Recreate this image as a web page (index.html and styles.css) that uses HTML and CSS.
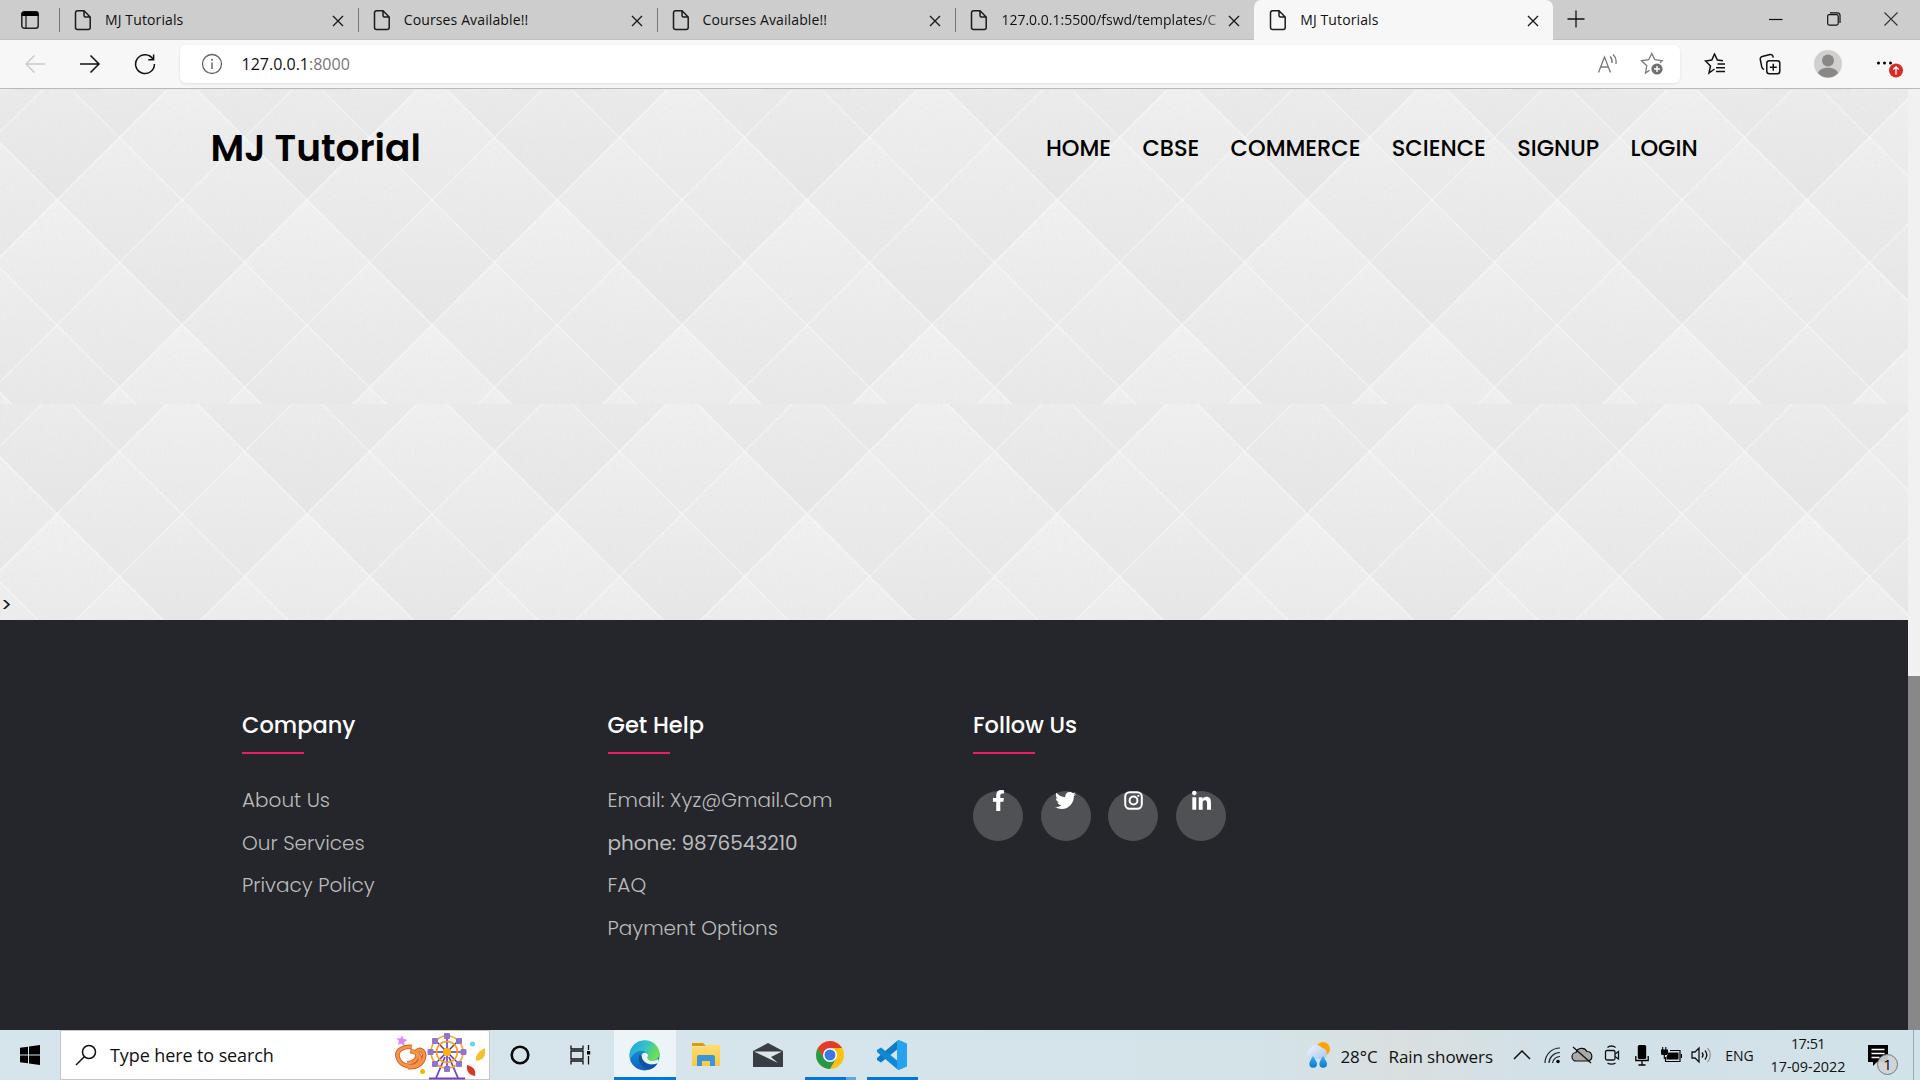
FILE: index.html
```html
<!DOCTYPE html>
<html lang="en">
<head>
<meta charset="utf-8">
<title>MJ Tutorials</title>
<link rel="stylesheet" href="styles.css">
</head>
<body>
<svg class="defs" aria-hidden="true">
  <defs>
    <symbol id="page" viewBox="0 0 18 22"><path d="M3.5 1.8H10L16.2 8v10.4a2 2 0 0 1-2 2H3.5a2 2 0 0 1-2-2V3.8a2 2 0 0 1 2-2zM10 2v4.5A1.5 1.5 0 0 0 11.500 8H16" fill="none" stroke="#1b1b1b" stroke-width="1.5"/></symbol>
    <symbol id="close" viewBox="0 0 12 12"><path d="M1 1l10 10M11 1L1 11" stroke="#1b1b1b" stroke-width="1.4"/></symbol>
    <linearGradient id="edgeA" x1="0" y1="0" x2="1" y2=".4"><stop offset="0" stop-color="#1fa5e0"/><stop offset=".55" stop-color="#35c1c9"/><stop offset="1" stop-color="#6be04c"/></linearGradient>
    <linearGradient id="edgeB" x1="0" y1="0" x2="0" y2="1"><stop offset="0" stop-color="#1b9de2"/><stop offset="1" stop-color="#0f63bd"/></linearGradient>
    <linearGradient id="folder" x1="0" y1="0" x2="0" y2="1"><stop offset="0" stop-color="#ffdb70"/><stop offset="1" stop-color="#fbc93e"/></linearGradient>
    <linearGradient id="drop" x1="0" y1="0" x2="0" y2="1"><stop offset="0" stop-color="#36b4ef"/><stop offset="1" stop-color="#0a77cf"/></linearGradient>
    <linearGradient id="cloud" x1="0" y1="0" x2="1" y2="1"><stop offset="0" stop-color="#f4f8ff"/><stop offset="1" stop-color="#a9c4ef"/></linearGradient>
  </defs>
</svg>

<header class="tabstrip">
  <div class="workspaces"><svg width="20" height="20" viewBox="0 0 20 20"><rect x="1.800" y="1.800" width="16.400" height="16.400" rx="2.500" fill="none" stroke="#222" stroke-width="1.500"/><path d="M1.500 6V4a2.500 2.500 0 0 1 2.500-2.500h12A2.500 2.500 0 0 1 18.500 4v2z" fill="#000"/><path d="M6 6v12" stroke="#222" stroke-width="1.300"/></svg></div>
  <div class="tab"><svg class="ico"><use href="#page"/></svg><span class="title">MJ Tutorials</span><svg class="x"><use href="#close"/></svg></div>
  <div class="tab"><svg class="ico"><use href="#page"/></svg><span class="title">Courses Available!!</span><svg class="x"><use href="#close"/></svg></div>
  <div class="tab"><svg class="ico"><use href="#page"/></svg><span class="title">Courses Available!!</span><svg class="x"><use href="#close"/></svg></div>
  <div class="tab"><svg class="ico"><use href="#page"/></svg><span class="title faded">127.0.0.1:5500/fswd/templates/C</span><svg class="x"><use href="#close"/></svg></div>
  <div class="tab active"><svg class="ico"><use href="#page"/></svg><span class="title">MJ Tutorials</span><svg class="x"><use href="#close"/></svg></div>
  <svg class="newtab" width="18" height="18" viewBox="0 0 18 18"><path d="M9 .5v17M.5 9h17" stroke="#111" stroke-width="1.300"/></svg>
  <div class="winbtns">
    <svg width="14" height="14" viewBox="0 0 14 14"><path d="M0 7.500h13.500" stroke="#111" stroke-width="1.200"/></svg>
    <svg width="14" height="14" viewBox="0 0 14 14"><rect x=".7" y="2.600" width="10.500" height="10.500" rx="1.500" fill="none" stroke="#111" stroke-width="1.200"/><path d="M3 .8h7.500a2.500 2.500 0 0 1 2.500 2.500V11" fill="none" stroke="#111" stroke-width="1.200"/></svg>
    <svg width="14" height="14" viewBox="0 0 14 14"><path d="M.5.5l13 13M13.500.5l-13 13" stroke="#333" stroke-width="1.100"/></svg>
  </div>
</header>

<div class="toolbar">
  <svg class="nav-ico" viewBox="0 0 22 22"><path d="M21 11H2M10.500 2.500L2 11l8.500 8.500" fill="none" stroke="#c9c9c9" stroke-width="1.400"/></svg>
  <svg class="nav-ico" viewBox="0 0 22 22"><path d="M1 11h19M11.500 2.500L20 11l-8.500 8.500" fill="none" stroke="#111" stroke-width="1.500"/></svg>
  <svg class="nav-ico" viewBox="0 0 22 22"><path d="M19 6.200A9.400 9.400 0 1 0 20.400 11M19.600 1.500v5.300h-5.300" fill="none" stroke="#111" stroke-width="1.500"/></svg>
  <div class="address">
    <svg width="22" height="22" viewBox="0 0 22 22"><circle cx="11" cy="11" r="9.500" fill="none" stroke="#666" stroke-width="1.300"/><path d="M11 9.500v6.500" stroke="#666" stroke-width="1.500"/><circle cx="11" cy="6.800" r="1" fill="#666"/></svg>
    <span class="url">127.0.0.1<i>:8000</i></span>
    <svg class="read" width="22" height="22" viewBox="0 0 22 22"><path d="M1.500 19.500L7.500 4l6 15.500M3.700 14h7.600M13 3.500c1.700 1.500 2.300 3.800 2 6.500M16 1.500c2.700 2.500 3.600 5.500 3 9.500" fill="none" stroke="#777" stroke-width="1.300"/></svg>
    <svg width="24" height="24" viewBox="0 0 24 24"><path d="M9.500 18.200L5.500 21l1.300-7.200L1.500 8.700l7.200-1L11.800 1.500l3 6.200 7.200 1-2 2" fill="none" stroke="#777" stroke-width="1.300"/><circle cx="17" cy="17" r="5.600" fill="#707070"/><path d="M17 14v6M14 17h6" stroke="#fff" stroke-width="1.400"/></svg>
  </div>
  <div class="actions">
    <svg width="22" height="22" viewBox="0 0 22 22"><path d="M10.500 16L5 20l1.500-7L1.500 8l6.300-1L10.500 1l2.900 6 5.600.8M13.500 11H21M12 14.800H21M12 18.500H21" fill="none" stroke="#111" stroke-width="1.500"/></svg>
    <svg width="22" height="22" viewBox="0 0 22 22"><rect x="7.800" y="7.800" width="13" height="13" rx="2.500" fill="none" stroke="#111" stroke-width="1.500"/><path d="M14.300 10.800v7M10.800 14.300h7M5 16.500a3 3 0 0 1-2.200-2.300L1.300 6.500A2.500 2.500 0 0 1 3.200 3.500L11 1.500a2.500 2.500 0 0 1 3 1.900l.2 1.300" fill="none" stroke="#111" stroke-width="1.500"/></svg>
    <svg width="28" height="28" viewBox="0 0 28 28"><circle cx="14" cy="14" r="14" fill="#d2d0ce"/><circle cx="14" cy="10.500" r="6" fill="#8a8886"/><path d="M4 23c2-7 18-7 20 0-5 6-15 6-20 0z" fill="#8a8886"/></svg>
    <svg width="28" height="28" viewBox="0 0 28 28"><circle cx="3.500" cy="13" r="1.500"/><circle cx="9.500" cy="13" r="1.500"/><circle cx="15.500" cy="13" r="1.500"/><circle cx="21" cy="20.500" r="7" fill="#d92c27"/><path d="M21 24.500v-7.500M18.300 19.500l2.700-2.700 2.700 2.700" fill="none" stroke="#fff" stroke-width="1.300"/></svg>
  </div>
</div>

<div class="viewport">
  <main class="page">
    <section class="hero">
      <nav class="menu">
        <a class="brand">MJ Tutorial</a>
        <ul>
          <li>HOME</li><li>CBSE</li><li>COMMERCE</li><li>SCIENCE</li><li>SIGNUP</li><li>LOGIN</li>
        </ul>
      </nav>
      <span class="stray">&gt;</span>
    </section>
    <footer class="footer">
      <div class="col">
        <h4>Company</h4>
        <ul><li>About Us</li><li>Our Services</li><li>Privacy Policy</li></ul>
      </div>
      <div class="col">
        <h4>Get Help</h4>
        <ul><li>Email: Xyz@Gmail.Com</li><li class="plain">phone: 9876543210</li><li>FAQ</li><li>Payment Options</li></ul>
      </div>
      <div class="col">
        <h4>Follow Us</h4>
        <div class="social">
          <a><svg width="13" height="21" viewBox="0 0 320 512"><path d="M279.140 288l14.220-92.660h-88.910v-60.130c0-25.350 12.420-50.060 52.240-50.060h40.420V6.260S260.430 0 225.360 0c-73.220 0-121.080 44.380-121.080 124.720v70.620H22.890V288h81.390v224h100.170V288z"/></svg></a>
          <a><svg width="21" height="21" viewBox="0 0 512 512"><path d="M459.370 151.716c.325 4.548.325 9.097.325 13.645 0 138.720-105.583 298.558-298.558 298.558-59.452 0-114.680-17.219-161.137-47.106 8.447.974 16.568 1.299 25.340 1.299 49.055 0 94.213-16.568 130.274-44.832-46.132-.975-84.792-31.188-98.112-72.772 6.498.974 12.995 1.624 19.818 1.624 9.421 0 18.843-1.300 27.614-3.573-48.081-9.747-84.143-51.980-84.143-102.985v-1.299c13.969 7.797 30.214 12.670 47.431 13.319-28.264-18.843-46.781-51.005-46.781-87.391 0-19.492 5.197-37.360 14.294-52.954 51.655 63.675 129.300 105.258 216.365 109.807-1.624-7.797-2.599-15.918-2.599-24.040 0-57.828 46.782-104.934 104.934-104.934 30.213 0 57.502 12.670 76.670 33.137 23.715-4.548 46.456-13.320 66.599-25.340-7.798 24.366-24.366 44.833-46.132 57.827 21.117-2.273 41.584-8.122 60.426-16.243-14.292 20.791-32.161 39.308-52.628 54.253z"/></svg></a>
          <a><svg width="21" height="21" viewBox="0 0 21 21"><rect x="2.200" y="2.200" width="16.600" height="16.600" rx="4.500" fill="none" stroke="#fff" stroke-width="2"/><circle cx="10.500" cy="10.500" r="3.900" fill="none" stroke="#fff" stroke-width="2"/><circle cx="15.300" cy="5.800" r="1.100"/></svg></a>
          <a><svg width="19" height="21" viewBox="0 -20 448 496"><path d="M100.280 448H7.400V148.900h92.880zM53.790 108.100C24.090 108.100 0 83.500 0 53.800a53.790 53.790 0 0 1 107.580 0c0 29.700-24.100 54.300-53.790 54.300zM447.900 448h-92.680V302.400c0-34.700-.7-79.200-48.290-79.200-48.290 0-55.690 37.700-55.690 76.700V448h-92.780V148.900h89.080v40.800h1.300c12.400-23.500 42.690-48.300 87.880-48.300 94 0 111.280 61.900 111.280 142.300V448z"/></svg></a>
        </div>
      </div>
    </footer>
  </main>
  <div class="scrollbar"><div class="thumb"></div></div>
</div>

<div class="taskbar">
  <div class="start"><svg width="20" height="20" viewBox="0 0 20 20"><path d="M0 2.800L8 1.700V9.400H0zM9 1.500L20 0v9.400H9zM0 10.400h8v7.800L0 17.200zM9 10.400h11V20L9 18.400z"/></svg></div>
  <div class="search">
    <svg width="22" height="22" viewBox="0 0 22 22"><circle cx="14" cy="8" r="6.500" fill="none" stroke="#111" stroke-width="1.500"/><path d="M9.300 12.700L1 21" stroke="#111" stroke-width="1.500"/></svg>
    <span class="prompt">Type here to search</span>
    <svg class="fair" width="92" height="48" viewBox="0 0 92 48">
      <path d="M7 2.500l1.500 3.200 4 1.300-3.200 2 .2 4-3-2.200-3.700 1 1.200-3.500-2.500-3 4 .2z" fill="#dd85f5"/>
      <g fill="none" stroke="#d0601c" stroke-width="4.600"><path d="M17 14C9 13 0 17 3 25c3 9 16 11 21 4 3-5-1-10-9-11M12 30c8 0 12-5 10-12 4-3 8 1 7 6-1 7-8 11-16 10"/></g>
      <g fill="none" stroke="#f7924a" stroke-width="2.800"><path d="M17 14C9 13 0 17 3 25c3 9 16 11 21 4 3-5-1-10-9-11M12 30c8 0 12-5 10-12 4-3 8 1 7 6-1 7-8 11-16 10"/></g>
      <g stroke="#5b3a9e" stroke-width="1.500" fill="none"><path d="M52 4v30M37 19h30M41 8l22 22M63 8L41 30"/><path d="M50 24L41 45M54 24l9 21" stroke="#7142c4" stroke-width="1.800"/><path d="M34 45.500h36" stroke="#7142c4" stroke-width="2"/></g>
      <g fill="none" stroke="#ff9e20"><circle cx="52" cy="19" r="16" stroke-width="1.600"/><circle cx="52" cy="19" r="10.500" stroke-width="1.600"/></g>
      <circle cx="52" cy="19" r="4" fill="#ffb000"/>
      <g fill="#8f76cc"><rect x="49" y="0" width="6" height="6" rx="1"/><rect x="49" y="33" width="6" height="6" rx="1"/><rect x="32.500" y="16" width="6" height="6" rx="1"/><rect x="65.500" y="16" width="6" height="6" rx="1"/><rect x="37" y="5" width="6" height="6" rx="1"/><rect x="61" y="5" width="6" height="6" rx="1"/><rect x="37" y="28" width="6" height="6" rx="1"/><rect x="61" y="28" width="6" height="6" rx="1"/></g>
      <circle cx="77.500" cy="11" r="2.500" fill="#65d4ea"/><circle cx="27.500" cy="38.500" r="2.500" fill="#ffb400"/>
      <path d="M90 15c1 9-2 12-9 13-1-6 3-10 9-13z" fill="#f6bf2e"/><path d="M72 32c7 2 9 5 8 11-6-1-9-5-8-11z" fill="#d8372c"/>
    </svg>
  </div>
  <div class="slot cortana"><svg width="20" height="20" viewBox="0 0 20 20"><circle cx="10" cy="10" r="8.300" fill="none" stroke="#0b0b0b" stroke-width="2.600"/></svg></div>
  <div class="slot taskview"><svg width="21" height="20" viewBox="0 0 21 20"><path d="M1 .5v3.500h12V.5M1 19.500V16h12v3.500M1 6h12v8H1zM18.500 0v5M18.500 11v8.500" fill="none" stroke="#111" stroke-width="1.300"/><rect x="17" y="6" width="3.200" height="3.500"/></svg></div>
  <div class="slot app active"><svg width="31" height="31" viewBox="0 0 32 32"><circle cx="16" cy="16" r="15.500" fill="url(#edgeB)"/><path d="M1 13C3 4 10 .5 16.500.5 26 .5 31.500 8 31.500 14c0 5-4 7.500-8 7.500-4 0-5.500-1.500-4.500-3.500 2-3-1-7-6-7-5 0-9 3-12 9z" fill="url(#edgeA)"/><path d="M11 15c-3 7 2 15 10 15.500 4-1 7-3.500 8.500-6.500-6 4-16 1-16-7z" fill="#10529f"/><path d="M13 16c0-3 5-4 6.500-1 .5 1.500-.5 2-.5 3.500 0 3 6 4 10 1.500 2-1 1.500 2 .5 4-7 3-16 0-16.500-8z" fill="#edf4f7"/></svg></div>
  <div class="slot app"><svg width="28" height="24" viewBox="0 0 28 24"><path d="M0 0h11l3 3H0z" fill="#e09a00"/><path d="M0 2h0v2h12l2-2h14v21H0z" fill="url(#folder)"/><path d="M5 23v-9a2 2 0 0 1 2-2h14a2 2 0 0 1 2 2v9h-5v-5h-8v5z" fill="#3a93dd"/></svg></div>
  <div class="slot app"><svg width="30" height="24" viewBox="0 0 30 24"><path d="M0 8L15 0l15 8v16H0z" fill="#393e42"/><path d="M1 8.500h28L18 14l7 6L1 8.500z" fill="#dbe7ed"/></svg></div>
  <div class="slot app chrome"><svg width="28" height="28" viewBox="0 0 28 28"><circle cx="14" cy="14" r="14" fill="#fdc111"/><path d="M14 7h12.100A14 14 0 0 0 1.900 7l6 10.500z" fill="#e33b2e"/><path d="M1.900 7A14 14 0 0 0 14 28l6-10.500L14 20.500 8 17.500z" fill="#279847"/><circle cx="14" cy="14" r="7" fill="#fff"/><circle cx="14" cy="14" r="5.500" fill="#3b78e7"/></svg></div>
  <div class="slot app code"><svg width="30" height="30" viewBox="0 0 30 30"><path d="M22 0v8L4 22.500 0 20v-2L20 1z" fill="#0a7cc8"/><path d="M22 30v-8L4 7.500 0 10v2l20 17z" fill="#1088d4"/><path d="M22 0l8 3.500v23L22 30l-2-1.500V1.500z" fill="#25a3ee"/></svg></div>
  <div class="tray">
    <div class="weather"><svg width="27" height="28" viewBox="0 0 27 28"><circle cx="19" cy="8" r="7" fill="#ffa50c"/><path d="M6 18a5.500 5.500 0 0 1 0-10 7 7 0 0 1 12-1 6 6 0 0 1 2 11z" fill="url(#cloud)"/><path d="M9 15c3 5 4 6 4 8a3.800 3.800 0 0 1-7.600 0c0-2 1-4 3.600-8zM19 15c3 5 4 6 4 8a3.800 3.800 0 0 1-7.600 0c0-2 1-4 3.600-8z" fill="url(#drop)"/></svg><span class="deg">28°C</span><span>Rain showers</span></div>
    <div class="ti"><svg width="18" height="10" viewBox="0 0 18 10"><path d="M1 9l8-8 8 8" fill="none" stroke="#111" stroke-width="1.500"/></svg></div>
    <div class="ti"><svg width="18" height="18" viewBox="0 0 18 18"><g fill="none" stroke="#222" stroke-width="1.200"><path d="M2 17A15 15 0 0 1 17 2M6 17A11 11 0 0 1 17 6.500M9.500 17a7.500 7.500 0 0 1 7.500-6.500"/></g><circle cx="15" cy="15.500" r="1.800"/></svg></div>
    <div class="ti"><svg width="22" height="18" viewBox="0 0 22 18"><path d="M5.500 15a4.200 4.200 0 0 1-.5-8.500 6 6 0 0 1 11-1 4.800 4.800 0 0 1 1 9.500z" fill="#aaa" stroke="#111" stroke-width="1.200"/><path d="M2 1l18 16" stroke="#111" stroke-width="1.400"/></svg></div>
    <div class="ti"><svg width="16" height="20" viewBox="0 0 16 20"><g fill="none" stroke="#111" stroke-width="1.300"><rect x="1.500" y="5.500" width="9.500" height="9.500" rx="1.500"/><path d="M11 9l3.500-2.500v7.500L11 11.500M3.500 2.500C5.500.5 9.500.5 11.500 2.500M3.500 18c2 1.500 6 1.500 8 0"/></g></svg></div>
    <div class="ti"><svg width="14" height="22" viewBox="0 0 14 22"><rect x="2.800" y="1" width="8.400" height="14" rx="1.500"/><path d="M.8 12v4.500h12.400V12M7 16.500V21M3.500 21h7" fill="none" stroke="#000" stroke-width="1.300"/></svg></div>
    <div class="ti"><svg width="21" height="16" viewBox="0 0 21 16"><path d="M7.500 5.500h10v7h-12V10z"/><path d="M4.500 10v4.500h14.500v-11H9M20.500 7v4" fill="none" stroke="#000" stroke-width="1.200"/><path d="M0 3h6.500v2.500a2 2 0 0 1-2 2H2a2 2 0 0 1-2-2zM1.700 0v3M4.800 0v3M3.300 7v5" stroke="#000" stroke-width="1.100"/></svg></div>
    <div class="ti"><svg width="21" height="18" viewBox="0 0 21 18"><path d="M1 6h3l4-4v14l-4-4H1zM11 6.500c1.300 1.500 1.300 3.500 0 5M14 4.500c2.200 2.700 2.200 6.300 0 9" fill="none" stroke="#111" stroke-width="1.300"/><path d="M16.500 2c3.700 4 3.700 10 0 14" fill="none" stroke="#8b979c" stroke-width="1.300"/></svg></div>
    <div class="lang">ENG</div>
    <div class="clock"><span class="time">17:51</span><span>17-09-2022</span></div>
    <div class="notes"><svg width="32" height="32" viewBox="0 0 32 32"><path d="M0 1h20v17H9l-4 4v-4H0z"/><path d="M3.500 5.500h13M3.500 9.500h13M3.500 13.500h8" stroke="#fff" stroke-width="1.300"/><circle cx="19.500" cy="20.500" r="10" fill="#cfd3d5" fill-opacity=".93" stroke="#777" stroke-width="1"/><text x="19.500" y="26" text-anchor="middle" class="count">1</text></svg></div>
  </div>
</div>
</body>
</html>
```
FILE: styles.css
```css
* { box-sizing: border-box; margin: 0; padding: 0; }
body { width: 1920px; height: 1080px; overflow: hidden; display: flex; flex-direction: column; font-family: "Segoe UI", "Open Sans", sans-serif; color: #111; }
i { font-style: normal; }
svg { display: block; flex: none; }
ul { list-style: none; }
.defs { position: absolute; width: 0; height: 0; }

/* browser tabs */
.tabstrip { height: 40px; flex: none; display: flex; background: #cdcdcd; border-bottom: 1px solid #c0c0c0; }
.workspaces { width: 59px; padding: 10px 0 0 20px; }
.tab { width: 298.800px; height: 40px; display: flex; align-items: center; padding: 0 14px 0 15px; font-size: 14px; letter-spacing: .12px; }
.tab::before { content: ""; width: 1px; height: 24px; background: #777; margin-left: -15px; margin-right: 14px; }
.tab .ico { width: 18px; height: 22px; }
.tab .title { flex: 1; margin: -2px 0 0 13px; overflow: hidden; white-space: nowrap; }
.tab .x { width: 12px; height: 12px; margin-top: 1px; }
.tab.active { background: #f7f7f7; border-radius: 7px 7px 0 0; }
.tab.active::before { background: transparent; }
.tab .faded { letter-spacing: 0; -webkit-mask-image: linear-gradient(90deg, #000 88%, transparent); }
.newtab { margin: 10px 0 0 14px; }
.winbtns { margin: 12px 22px 0 auto; display: flex; gap: 43.500px; }

/* address row */
.toolbar { height: 49px; flex: none; display: flex; align-items: center; background: #f7f7f7; border-bottom: 1px solid #b9b9b9; padding-left: 24px; }
.nav-ico { width: 22px; height: 22px; margin-right: 33px; }
.address { width: 1500px; height: 38px; margin-left: -9px; background: #fff; border-radius: 6px; box-shadow: 0 1px 3px rgba(0,0,0,.1); display: flex; align-items: center; padding: 0 16px 0 21px; }
.url { margin: -1px 0 0 18.500px; flex: 1; font-size: 16px; }
.url i { color: #767676; }
.read { margin-right: 21px; }
.actions { display: flex; align-items: center; margin-left: 24px; gap: 33px; }

/* site */
.viewport { height: 941px; flex: none; display: flex; }
.page { width: 1908px; font-family: "Poppins", "Inter", sans-serif; }
.hero { height: 531px; display: flex; flex-direction: column; justify-content: space-between; background: #ebebeb url("data:image/svg+xml,%3Csvg xmlns='http://www.w3.org/2000/svg' width='250' height='314' viewBox='0 0 250 314'%3E%3Cdefs%3E%3Cfilter id='n' x='0' y='0' width='100%25' height='100%25'%3E%3CfeTurbulence type='fractalNoise' baseFrequency='.35' numOctaves='2' stitchTiles='stitch'/%3E%3CfeColorMatrix values='0 0 0 0 .6 0 0 0 0 .6 0 0 0 0 .6 .16 0 0 0 -.05'/%3E%3C/filter%3E%3ClinearGradient id='g' x1='0' y1='0' x2='0' y2='1'%3E%3Cstop offset='0' stop-color='%23f0f0f0'/%3E%3Cstop offset='1' stop-color='%23e8e8e8'/%3E%3C/linearGradient%3E%3ClinearGradient id='h' x1='0' y1='0' x2='0' y2='1'%3E%3Cstop offset='0' stop-color='%23fff' stop-opacity='.12'/%3E%3Cstop offset='1' stop-color='%23c8c8c8' stop-opacity='.05'/%3E%3C/linearGradient%3E%3Cpath id='d' d='M0 0L125 125L0 250L-125 125Z' fill='url(%23g)'/%3E%3Cpath id='c' d='M0 0L62.500 62.500L0 125L-62.500 62.500Z' fill='url(%23h)' stroke='%23fff' stroke-opacity='.24' stroke-width='1.300'/%3E%3Cg id='q'%3E%3Cuse href='%23d'/%3E%3Cuse href='%23c'/%3E%3Cuse href='%23c' x='-62.500' y='62.500'/%3E%3Cuse href='%23c' x='62.500' y='62.500'/%3E%3Cuse href='%23c' y='125'/%3E%3Cpath d='M0 0L125 125L0 250L-125 125Z' fill='none' stroke='%23fff' stroke-opacity='.16' stroke-width='1.800'/%3E%3C/g%3E%3C/defs%3E%3Cuse href='%23q' x='57' y='-140'/%3E%3Cuse href='%23q' x='307' y='-140'/%3E%3Cuse href='%23q' x='-68' y='-15'/%3E%3Cuse href='%23q' x='182' y='-15'/%3E%3Cuse href='%23q' x='57' y='110'/%3E%3Cuse href='%23q' x='307' y='110'/%3E%3Cuse href='%23q' x='-68' y='235'/%3E%3Cuse href='%23q' x='182' y='235'/%3E%3Crect width='250' height='314' filter='url(%23n)'/%3E%3C/svg%3E") 0 1px; }
.menu { display: flex; padding-left: 210.500px; color: #000; }
.brand { font-size: 37.500px; font-weight: 600; line-height: 54px; padding-top: 32px; width: 835.500px; }
.menu ul { display: flex; gap: 31.250px; font-size: 22.500px; font-weight: 500; line-height: 32px; padding-top: 43px; }
.stray { font-size: 20px; line-height: 24px; padding: 0 0 3px 1px; }
.footer { height: 410px; background: #24262b; display: flex; padding: 87px 0 0 242px; }
.col { width: 365.500px; }
.col h4 { color: #fff; font-size: 22.500px; font-weight: 500; line-height: 36px; height: 47px; }
.col h4::after { content: ""; display: block; width: 62px; height: 2px; margin-top: 9px; background: #e91e63; }
.col ul { padding-top: 25.400px; }
.col li { font-size: 20px; font-weight: 300; line-height: 42.500px; color: #bbb; }
.col li.plain { font-weight: 400; }
.social { display: flex; gap: 17.700px; padding-top: 37px; }
.social a { width: 50px; height: 50px; border-radius: 50%; background: #505155; display: flex; justify-content: center; }
.social svg { fill: #fff; margin-top: -1px; }
.scrollbar { width: 12px; background: #f1f1f1; padding-top: 587px; }
.thumb { height: 354px; background: #888; }

/* taskbar */
.taskbar { height: 50px; flex: none; display: flex; background: linear-gradient(90deg, #d6e4eb, #d5e5eb 40%, #d3e3e8 65%, #dadfe0 73%, #d2e1e7 80%, #d2e2e9); }
.start { width: 60px; padding: 15px 20px; }
.search { width: 430px; background: #fff; border: 1px solid #c4c6c8; display: flex; padding-left: 14px; }
.search > svg:first-child { margin-top: 13px; }
.prompt { width: 298px; padding-left: 13px; font-size: 18px; line-height: 48px; letter-spacing: -.1px; }
.fair { margin-top: 2px; }
.slot { width: 62px; display: flex; align-items: center; justify-content: center; }
.cortana { width: 60px; }
.taskview { width: 63.500px; padding-right: 3px; }
.app { padding-right: 1px; }
.app.active { background: #edf4f7; box-shadow: inset 0 -3px #0078d7; }
.code { background: linear-gradient(#0078d7, #0078d7) 5px 100% / 51px 3px no-repeat; }
.chrome { background: linear-gradient(90deg, #0078d7 41px, #5ea9e4 41px) 5px 100% / 51px 3px no-repeat; }
.tray { display: flex; align-items: center; margin-left: 380px; flex: 1; }
.weather { width: 203px; display: flex; align-items: center; font-size: 17px; white-space: nowrap; letter-spacing: -.1px; }
.weather span { padding-top: 2px; }
.deg { width: 48px; margin-left: 10px; }
.ti { width: 30px; display: flex; justify-content: center; }
.lang { width: 46px; text-align: center; font-size: 14px; }
.clock { width: 91px; display: flex; flex-direction: column; align-items: center; font-size: 14.400px; line-height: 23px; }
.time { letter-spacing: -.5px; }
.notes { width: 60px; height: 50px; border-right: 1px solid #9aa9af; padding: 14px 0 0 14px; }
.count { font: 15px "Open Sans", sans-serif; }
```
